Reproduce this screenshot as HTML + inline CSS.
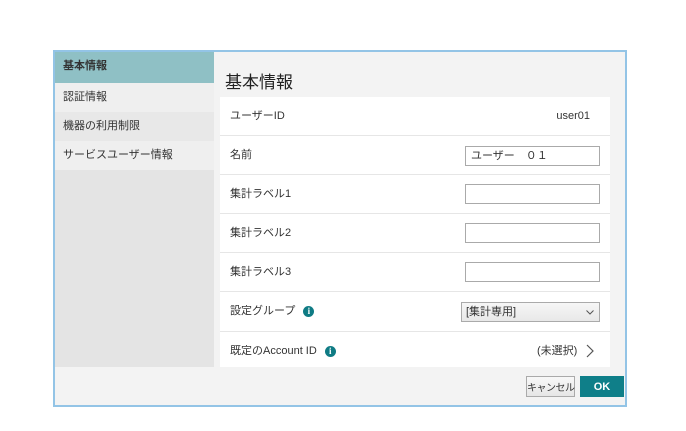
<!DOCTYPE html>
<html><head><meta charset="utf-8"><style>
*{margin:0;padding:0;box-sizing:border-box}
body{width:686px;height:431px;background:#fff;position:relative;font-family:"Liberation Sans","Noto Sans CJK JP",sans-serif;font-size:11px;color:#333;overflow:hidden}
.frame{position:absolute;left:53px;top:50px;width:574px;height:357px;border:2px solid #93c4e6;background:#f3f3f3}
.side{position:absolute;left:0;top:0;width:159px;height:315px;background:#e4e4e4}
.si{position:absolute;left:0;width:159px;padding-left:8px;font-size:11px;color:#333}
.row{position:absolute;left:165px;width:390px;background:#fff;border-bottom:1px solid #e6e6e6}
.lbl{position:absolute;left:10px;top:0;font-size:11px;white-space:nowrap}
.inp{position:absolute;left:245px;width:135px;height:20px;border:1px solid #aaa;background:#fff;font-size:11px;padding:0 5px;line-height:18px;white-space:nowrap}
.info{display:inline-block;width:11px;height:11px;border-radius:50%;background:#0f7b84;color:#fff;font-size:9px;font-weight:bold;text-align:center;line-height:11px;margin-left:8px;vertical-align:middle;font-family:"Liberation Serif",serif}
</style></head><body>
<div class="frame">
 <div class="side">
  <div class="si" style="top:0;height:31px;background:#8fc0c5;line-height:29px;font-weight:bold">基本情報</div>
  <div class="si" style="top:31px;height:29px;background:#efefef;line-height:29px">認証情報</div>
  <div class="si" style="top:60px;height:29px;background:#e8e8e8;line-height:29px">機器の利用制限</div>
  <div class="si" style="top:89px;height:29px;background:#efefef;line-height:29px">サービスユーザー情報</div>
 </div>
 <div style="position:absolute;left:170px;top:19px;font-size:17px;color:#222;line-height:24px">基本情報</div>
 <div class="row" style="top:45px;height:39px"><span class="lbl" style="line-height:38px">ユーザーID</span><span style="position:absolute;right:20px;top:0;line-height:38px">user01</span></div>
 <div class="row" style="top:84px;height:39px"><span class="lbl" style="line-height:38px">名前</span><div class="inp" style="top:10px">ユーザー　０１</div></div>
 <div class="row" style="top:123px;height:39px"><span class="lbl" style="line-height:38px">集計ラベル1</span><div class="inp" style="top:9px"></div></div>
 <div class="row" style="top:162px;height:39px"><span class="lbl" style="line-height:38px">集計ラベル2</span><div class="inp" style="top:9px"></div></div>
 <div class="row" style="top:201px;height:39px"><span class="lbl" style="line-height:38px">集計ラベル3</span><div class="inp" style="top:9px"></div></div>
 <div class="row" style="top:240px;height:40px"><span class="lbl" style="line-height:39px">設定グループ<span class="info">i</span></span>
  <div style="position:absolute;left:241px;top:10px;width:139px;height:20px;border:1px solid #aaa;background:linear-gradient(#f6f6f6,#e8e8e8);padding:0 4px;line-height:18px;font-size:11px">[集計専用]<svg style="position:absolute;right:5px;top:7px" width="8" height="5"><path d="M0.5 0.5L4 4L7.5 0.5" stroke="#555" fill="none"/></svg></div></div>
 <div class="row" style="top:280px;height:35px;border:none"><span class="lbl" style="line-height:38px">既定のAccount ID<span class="info">i</span></span>
  <span style="position:absolute;left:317px;top:0;line-height:38px">(未選択)</span>
  <svg style="position:absolute;left:366px;top:12px" width="8" height="14"><path d="M1 1L7 7L1 13" stroke="#555" fill="none" stroke-width="1.2"/></svg></div>
 <div style="position:absolute;left:471px;top:324px;width:49px;height:21px;border:1px solid #aaa;background:linear-gradient(#f8f8f8,#e6e6e6)"><span style="position:absolute;left:0;right:0;top:6px;font-size:10px;line-height:12px;text-align:center;white-space:nowrap;letter-spacing:-0.5px">キャンセル</span></div>
 <div style="position:absolute;left:525px;top:324px;width:44px;height:21px;background:#0f7f89;color:#fff;font-weight:bold;font-size:11px;text-align:center;line-height:23px">OK</div>
</div>
</body></html>
